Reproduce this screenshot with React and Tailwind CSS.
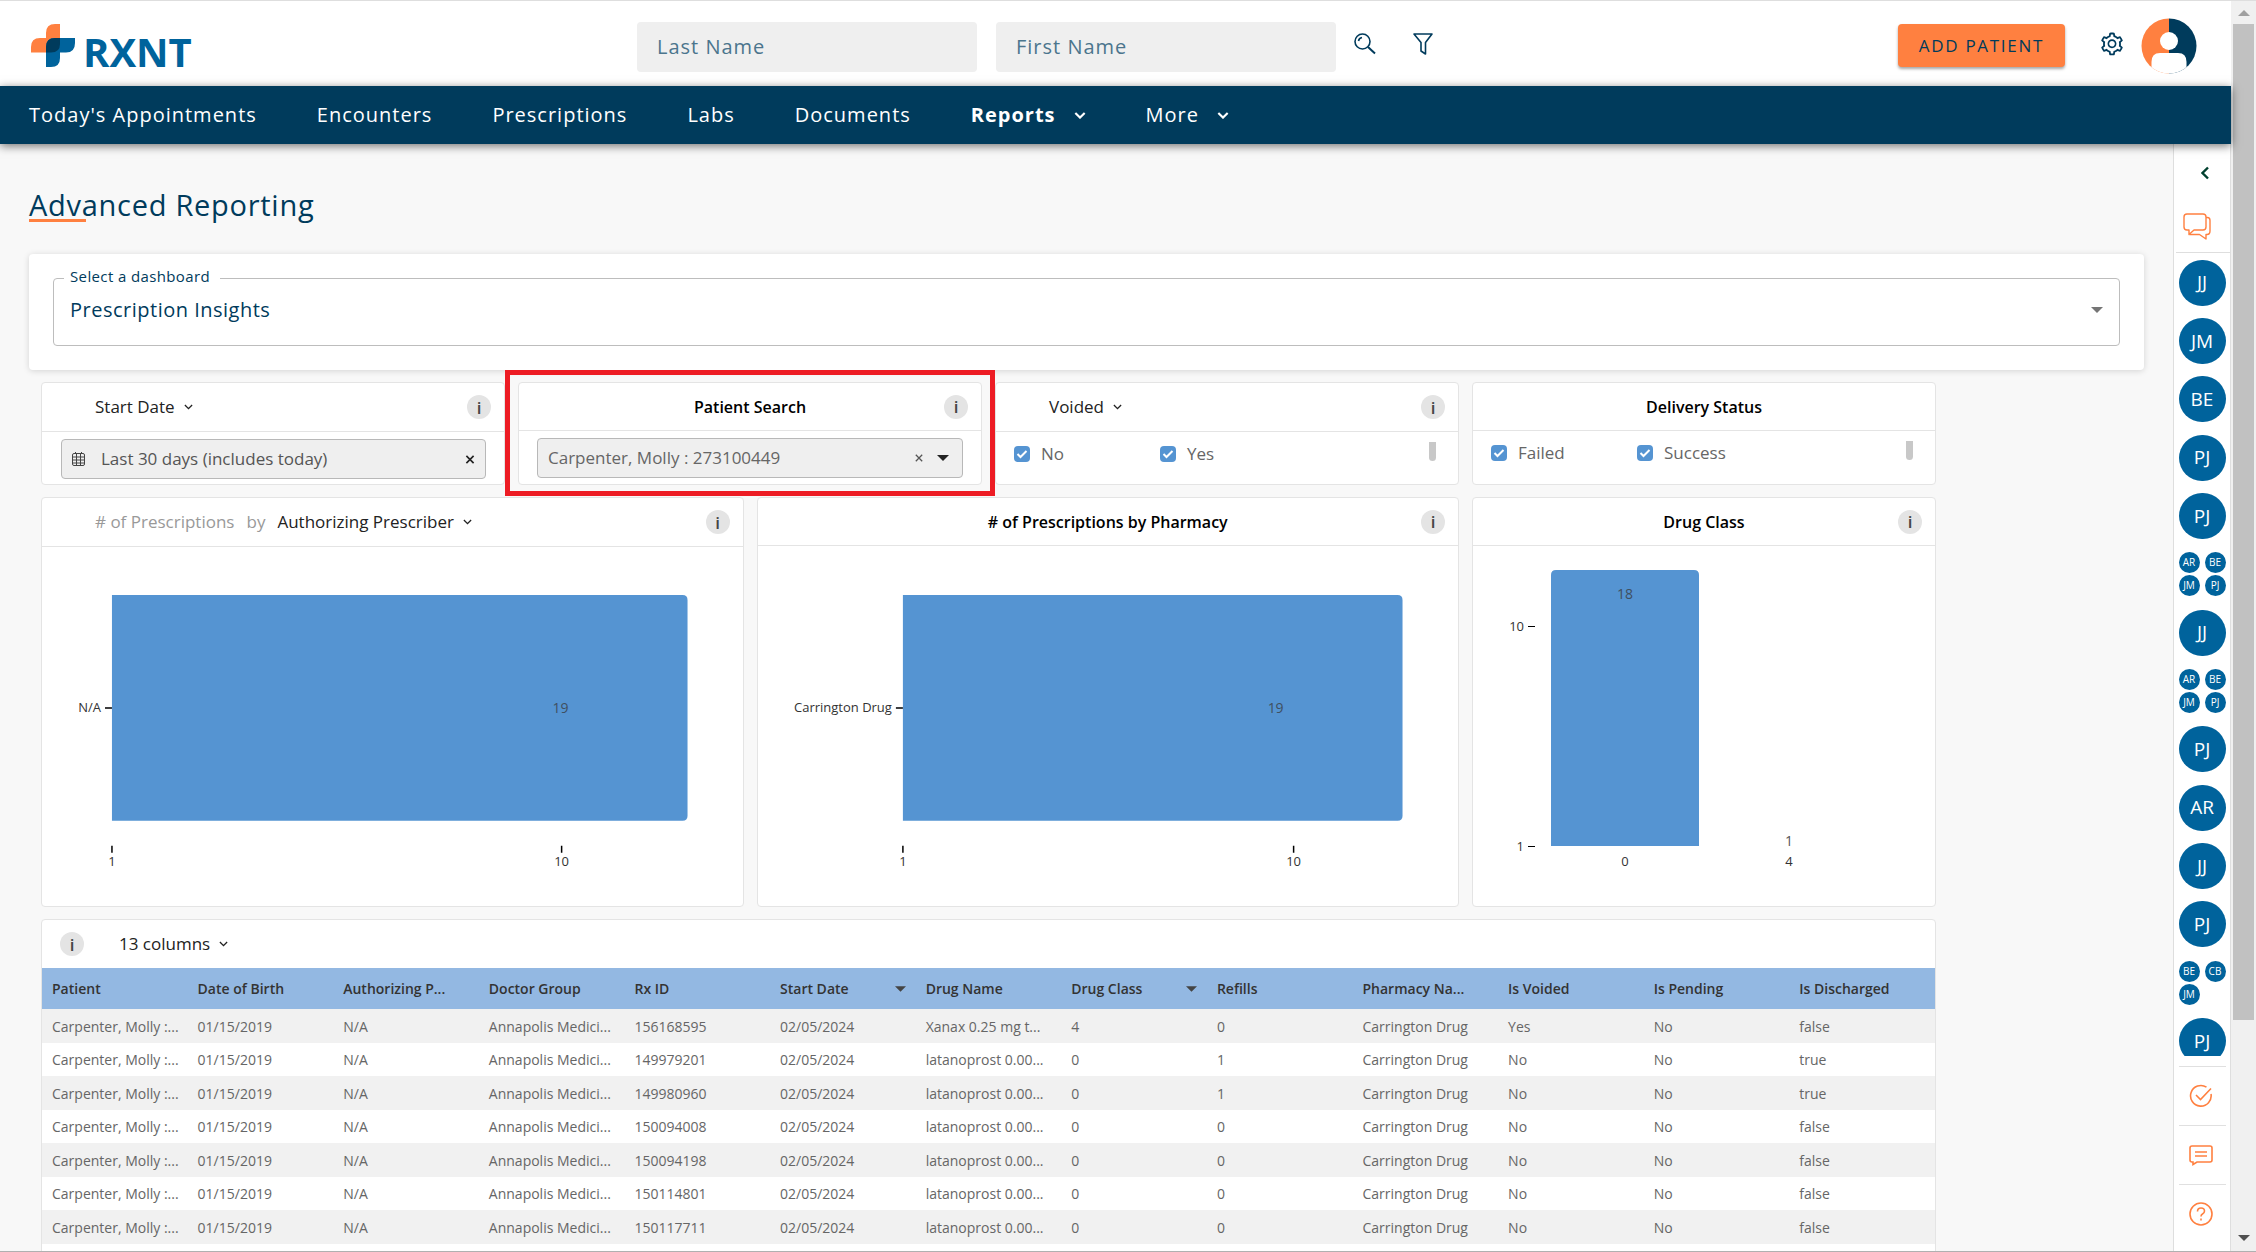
import React from "react";
import { AiOutlineSetting } from "react-icons/ai";

const NAV = [
  { label: "Today's Appointments" },
  { label: "Encounters" },
  { label: "Prescriptions" },
  { label: "Labs" },
  { label: "Documents" },
  { label: "Reports", menu: true, active: true },
  { label: "More", menu: true },
];

const COLUMNS = [
  "Patient", "Date of Birth", "Authorizing P...", "Doctor Group", "Rx ID", "Start Date", "Drug Name",
  "Drug Class", "Refills", "Pharmacy Na...", "Is Voided", "Is Pending", "Is Discharged",
];
const SORTED = ["Start Date", "Drug Class"];

const row = (rx, drug, cls, refills, voided, discharged) => [
  "Carpenter, Molly :...", "01/15/2019", "N/A", "Annapolis Medici...", rx, "02/05/2024", drug, cls, refills,
  "Carrington Drug", voided, "No", discharged,
];
const ROWS = [
  row("156168595", "Xanax 0.25 mg t...", "4", "0", "Yes", "false"),
  row("149979201", "latanoprost 0.00...", "0", "1", "No", "true"),
  row("149980960", "latanoprost 0.00...", "0", "1", "No", "true"),
  row("150094008", "latanoprost 0.00...", "0", "0", "No", "false"),
  row("150094198", "latanoprost 0.00...", "0", "0", "No", "false"),
  row("150114801", "latanoprost 0.00...", "0", "0", "No", "false"),
  row("150117711", "latanoprost 0.00...", "0", "0", "No", "false"),
];

const CHATS = [
  ["JJ"], ["JM"], ["BE"], ["PJ"], ["PJ"], ["AR", "BE", "JM", "PJ"], ["JJ"], ["AR", "BE", "JM", "PJ"],
  ["PJ"], ["AR"], ["JJ"], ["PJ"], ["BE", "CB", "JM"], ["PJ"],
];

function Chevron({ className = "w-[9px] h-[6px]", width = 1.5 }) {
  return (
    <svg viewBox="0 0 10 6" className={className} fill="none" stroke="currentColor" strokeWidth={width} aria-hidden="true">
      <path d="M1 0.8 L5 4.8 L9 0.8" />
    </svg>
  );
}

function Caret({ className }) {
  return (
    <svg viewBox="0 0 12 6" className={className} fill="currentColor" aria-hidden="true">
      <path d="M0 0 H12 L6 6 Z" />
    </svg>
  );
}

function Info() {
  return (
    <button aria-label="Information" className="flex h-6 w-6 shrink-0 items-center justify-center rounded-full bg-[#e4e4e4] text-[17px] leading-none font-semibold text-[#444]">
      i
    </button>
  );
}

function Logo() {
  return (
    <a href="#home" aria-label="RXNT home" className="flex items-end gap-2">
      <svg viewBox="0 0 44 43" className="h-[43px] w-11" aria-hidden="true">
        <path d="M15 14 V9 Q15 0 24 0 H29 V28.500 H0 V23 Q0 14 9 14 Z" fill="#ff8040" />
        <path d="M24 14 H44 V19 Q44 28.500 35 28.500 H29 V34 Q29 43 20 43 H15 V23 Q15 14 24 14 Z" fill="#00639c" />
        <path d="M24 14 H29 V20 Q29 28.500 20 28.500 H15 V23 Q15 14 24 14 Z" fill="#003b5c" />
      </svg>
      <span className="text-[40px] leading-[31px] font-bold text-[#00639c]">RXNT</span>
    </a>
  );
}

function SearchField({ label }) {
  return (
    <input
      aria-label={label}
      placeholder={label}
      className="h-[50px] w-[340px] rounded bg-[#efefef] px-5 text-[20px] tracking-wider text-[#003b5c] placeholder:text-[#4b758d]"
    />
  );
}

function TopBar() {
  return (
    <div className="flex h-[86px] items-center border-t border-[#dedede] bg-white pt-1 pr-[34px] pl-[31px]">
      <div className="w-[606px] shrink-0"><Logo /></div>
      <div className="mt-[2px] flex gap-[19px]">
        <SearchField label="Last Name" />
        <SearchField label="First Name" />
      </div>
      <div className="mb-1 ml-[17px] flex items-center gap-9 text-[#003b5c]">
        <button aria-label="Search">
          <svg viewBox="0 0 24 22" className="h-[22px] w-6" fill="none" stroke="currentColor" strokeWidth="1.6">
            <circle cx="9.500" cy="8.500" r="7.500" />
            <path d="M5.500 8 Q6 5 9 4.500" />
            <path d="M15 14 L22 20.500" strokeWidth="2" />
          </svg>
        </button>
        <button aria-label="Filter">
          <svg viewBox="0 0 20 22" className="h-[22px] w-5" fill="none" stroke="currentColor" strokeWidth="1.6">
            <path d="M1 1 H19 L12.500 9.500 V21 L8 18 V9.500 Z" strokeLinejoin="round" />
          </svg>
        </button>
      </div>
      <button className="ml-auto h-[43px] rounded bg-[#ff8040] px-[21px] text-[17px] font-medium tracking-widest text-[#003b5c] shadow-[0_2px_3px_rgba(0,0,0,0.35)]">
        ADD PATIENT
      </button>
      <button aria-label="Settings" className="mb-1 ml-[34px] text-[#003b5c]">
        <AiOutlineSetting className="h-[26px] w-[26px]" />
      </button>
      <button aria-label="Account" className="ml-4">
        <svg viewBox="0 0 56 56" className="h-14 w-14">
          <defs>
            <clipPath id="avatar"><circle cx="28" cy="28" r="27.500" /></clipPath>
          </defs>
          <g clipPath="url(#avatar)">
            <rect width="28" height="56" fill="#ff8040" />
            <rect x="28" width="28" height="56" fill="#003b5c" />
            <circle cx="28" cy="23" r="9" fill="#fff" />
            <path d="M10.500 60 V44 Q10.500 35 19 35 H37 Q45.500 35 45.500 44 V60 Z" fill="#fff" />
          </g>
        </svg>
      </button>
    </div>
  );
}

function NavBar() {
  return (
    <nav className="relative z-20 flex h-[58px] items-center gap-[60px] bg-[#003b5c] pl-[29px] text-[20px] tracking-wider text-white shadow-[0_2px_9px_rgba(0,0,0,0.55)]">
      {NAV.map((item) => (
        <a key={item.label} href="#nav" className={"flex items-center gap-[18px] " + (item.active ? "font-bold" : "font-medium")}>
          {item.label}
          {item.menu && <Chevron className="h-[7px] w-3" width={1.8} />}
        </a>
      ))}
    </nav>
  );
}

function Card({ className = "", children }) {
  return <section className={"rounded border border-[#e4e4e4] bg-white " + className}>{children}</section>;
}

function CardHead({ title, centered, info = true, muted }) {
  if (centered) {
    return (
      <header className="grid h-12 grid-cols-[24px_1fr_24px] items-center border-b border-[#e4e4e4] px-[13px] text-[16px] text-black">
        <h2 className="col-start-2 text-center font-semibold">{title}</h2>
        {info && <Info />}
      </header>
    );
  }
  return (
    <header className="flex h-[49px] items-center border-b border-[#e4e4e4] pr-[13px] pl-[53px] text-[17px] text-[#222]">
      {muted && <span className="mr-3 flex gap-3 text-[#999]"><span>{muted}</span><span>by</span></span>}
      <button className="mr-auto flex items-center gap-[9px]">{title}<Chevron /></button>
      <Info />
    </header>
  );
}

function Tick({ label }) {
  return (
    <label className="flex w-[146px] items-center gap-[11px]">
      <span className="grid h-4 w-4">
        <input type="checkbox" defaultChecked className="col-start-1 row-start-1 h-4 w-4 appearance-none rounded-sm bg-[#5594d2]" />
        <svg viewBox="0 0 16 16" className="pointer-events-none col-start-1 row-start-1 h-4 w-4" fill="none" stroke="#fff" strokeWidth="2" aria-hidden="true">
          <path d="M3.500 8 L6.500 11 L12.500 5" />
        </svg>
      </span>
      {label}
    </label>
  );
}

function TickList({ items }) {
  return (
    <div className="flex h-[43px] items-center pr-[22px] pl-[18px] text-[17px] text-[#666]">
      {items.map((t) => <Tick key={t} label={t} />)}
      <span className="mb-1 ml-auto h-[19px] w-[7px] rounded-b bg-[#c8c8c8]" />
    </div>
  );
}

function Filters() {
  return (
    <>
      <Card className="col-span-2 h-[103px]">
        <CardHead title="Start Date" />
        <div className="px-[18px] pt-[7px] pl-[19px]">
          <div className="flex h-10 items-center rounded-sm border border-[#b8b8b8] bg-[#efefef] px-[10px] text-[17px] text-[#555]">
            <svg viewBox="0 0 13 14" className="mr-4 h-[14px] w-[13px]" fill="none" stroke="#444" strokeWidth="1" aria-hidden="true">
              <rect x="0.500" y="1.500" width="12" height="12" rx="1.500" />
              <path d="M0.500 5 H12.500 M0.500 8 H12.500 M0.500 11 H12.500 M4.500 1.500 V13.500 M8.500 1.500 V13.500 M3.500 0 V2 M9.500 0 V2" />
            </svg>
            <span>Last 30 days (includes today)</span>
            <button aria-label="Clear date" className="ml-auto">
              <svg viewBox="0 0 10 10" className="h-[9px] w-[10px]" stroke="#222" strokeWidth="1.8"><path d="M1 1 L9 9 M9 1 L1 9" /></svg>
            </button>
          </div>
        </div>
      </Card>
      <Card className="relative col-span-2 h-[103px]">
        <CardHead title="Patient Search" centered />
        <div className="px-[18px] pt-[7px]">
          <div className="flex h-10 items-center rounded-sm border border-[#b8b8b8] bg-[#efefef] px-[10px] text-[17px] text-[#666]">
            <span>Carpenter, Molly : 273100449</span>
            <button aria-label="Clear patient" className="mr-[14px] ml-auto">
              <svg viewBox="0 0 10 10" className="h-2 w-2" stroke="#555" strokeWidth="1.6"><path d="M1 1 L9 9 M9 1 L1 9" /></svg>
            </button>
            <button aria-label="Choose patient" className="text-[#222]"><Caret className="mr-[3px] h-[6px] w-3" /></button>
          </div>
        </div>
        <div className="pointer-events-none absolute -inset-x-[14px] -top-[13px] -bottom-3 z-10 border-[5px] border-[#ed1c24]" />
      </Card>
      <Card className="col-span-2 h-[103px]">
        <CardHead title="Voided" />
        <TickList items={["No", "Yes"]} />
      </Card>
      <Card className="col-span-2 h-[103px]">
        <CardHead title="Delivery Status" centered info={false} />
        <TickList items={["Failed", "Success"]} />
      </Card>
    </>
  );
}

/* Horizontal bar on a logarithmic axis that runs from 1 upward. */
function BarChart({ name, x0, x1, ten, valueX, className = "" }) {
  return (
    <svg viewBox="0 0 701 360" className={"block w-full " + className} role="img" aria-label={name + ": 19"} fontSize="13" fill="#333">
      <path d={`M${x0} 48 H${x1 - 5} q5 0 5 5 V269 q0 5 -5 5 H${x0} Z`} fill="#5594d2" />
      <path d={`M${x0 - 7} 161 H${x0} M${x0} 299 V306 M${ten} 299 V306`} stroke="#000" strokeWidth="1.5" />
      <text x={x0 - 11} y="165" textAnchor="end">{name}</text>
      <text x={valueX} y="166" textAnchor="middle" fontSize="14" fontWeight="500" fill="#3f4f60">19</text>
      <text x={x0} y="319" textAnchor="middle">1</text>
      <text x={ten} y="319" textAnchor="middle">10</text>
    </svg>
  );
}

function ClassChart() {
  return (
    <svg viewBox="0 0 462 360" className="mt-px block w-full" role="img" aria-label="Drug class 0: 18, drug class 4: 1" fontSize="13" fill="#333">
      <path d="M78 299 V28 q0 -5 5 -5 H221 q5 0 5 5 V299 Z" fill="#5594d2" />
      <path d="M55 79.500 H62 M55 299.500 H62" stroke="#000" />
      <text x="51" y="84" textAnchor="end">10</text>
      <text x="51" y="304" textAnchor="end">1</text>
      <text x="152" y="52" textAnchor="middle" fontSize="14" fontWeight="500" fill="#3f4f60">18</text>
      <text x="152" y="319" textAnchor="middle">0</text>
      <text x="316" y="299" textAnchor="middle" fontSize="14" fontWeight="500" fill="#555">1</text>
      <text x="316" y="319" textAnchor="middle">4</text>
    </svg>
  );
}

function DataTable() {
  return (
    <Card className="col-span-8">
      <header className="flex h-12 items-center gap-[35px] px-[18px] text-[17px] text-[#222]">
        <Info />
        <button className="flex items-center gap-[9px]">13 columns<Chevron /></button>
      </header>
      <table className="w-full table-fixed border-collapse text-left text-[14px] whitespace-nowrap">
        <thead>
          <tr className="h-[41px] bg-[#93b8e2] text-[#333]">
            {COLUMNS.map((c) => (
              <th key={c} scope="col" className="px-[10px] font-semibold">
                <span className="flex items-center justify-between">
                  {c}
                  {SORTED.includes(c) && <Caret className="h-[6px] w-[11px] text-[#444]" />}
                </span>
              </th>
            ))}
          </tr>
        </thead>
        <tbody className="text-[#666]">
          {ROWS.map((r) => (
            <tr key={r[4]} className="odd:h-[34px] odd:bg-[#f1f1f1] even:h-[33px]">
              {r.map((v, i) => <td key={i} className="pr-0 pl-[10px]">{v}</td>)}
            </tr>
          ))}
        </tbody>
      </table>
      <div className="h-8" />
    </Card>
  );
}

function Main() {
  return (
    <main className="min-w-0 flex-1 overflow-hidden pr-[29px] pl-[29px]">
      <h1 className="mt-[42px] text-[29px] leading-[38px] tracking-wide text-[#003b5c]">Advanced Reporting</h1>
      <div className="-mt-[5px] h-[3px] w-[57px] bg-[#ff8040]" />
      <div className="mt-8 h-[116px] rounded bg-white px-6 pt-[14px] shadow-[0_1px_6px_rgba(0,0,0,0.15)]">
        <fieldset className="relative h-[78px] rounded border border-[#bdbdbd] text-[#003b5c]">
          <legend className="ml-[10px] pr-[10px] pb-1 pl-[6px] text-[15px] leading-4 tracking-wide">
            <label htmlFor="dashboard">Select a dashboard</label>
          </legend>
          <div className="flex items-center pr-4">
            <select id="dashboard" className="h-11 flex-1 appearance-none pl-4 text-[20px] tracking-wide">
              <option>Prescription Insights</option>
            </select>
            <Caret className="h-[6px] w-3 text-[#757575]" />
          </div>
        </fieldset>
      </div>
      <div className="mt-3 ml-3 grid max-w-[1895px] grid-cols-8 gap-x-[13px] gap-y-3">
        <Filters />
        <Card className="col-span-3 h-[410px]">
          <CardHead title="Authorizing Prescriber" muted="# of Prescriptions" />
          <BarChart name="N/A" x0={70} x1={646} ten={520} valueX={519} />
        </Card>
        <Card className="col-span-3 h-[410px]">
          <CardHead title="# of Prescriptions by Pharmacy" centered />
          <BarChart className="mt-px" name="Carrington Drug" x0={145} x1={645} ten={536} valueX={518} />
        </Card>
        <Card className="col-span-2 h-[410px]">
          <CardHead title="Drug Class" centered />
          <ClassChart />
        </Card>
        <DataTable />
      </div>
    </main>
  );
}

function ChatGroup({ people }) {
  if (people.length === 1) {
    return (
      <button className="h-[46px] w-[47px] rounded-full bg-[#00639c] text-[19px] text-white">{people[0]}</button>
    );
  }
  return (
    <button className="grid grid-cols-2 gap-x-[5px] gap-y-[2px]">
      {people.map((p) => (
        <span key={p} className="flex h-[21px] w-[21px] items-center justify-center rounded-full bg-[#00639c] text-[10px] font-medium text-white">{p}</span>
      ))}
    </button>
  );
}

function SideAction({ label, children }) {
  return (
    <button aria-label={label} className="flex h-[59px] w-[47px] shrink-0 items-center justify-center border-t border-[#e0e0e0] pr-[3px] text-[#ff8040]">
      <svg viewBox="0 0 24 24" className="h-6 w-6" fill="none" stroke="currentColor" strokeWidth="1.600">{children}</svg>
    </button>
  );
}

function Sidebar() {
  return (
    <aside className="flex w-[58px] shrink-0 flex-col items-center border-x border-[#dedede] bg-white">
      <button aria-label="Expand" className="mt-[22px] ml-[6px] text-[#00402f]">
        <svg viewBox="0 0 8 14" className="h-[14px] w-2" fill="none" stroke="currentColor" strokeWidth="2.400"><path d="M7 1.500 L1.500 7 L7 12.500" /></svg>
      </button>
      <button aria-label="Messages" className="mt-[33px] mr-[10px] text-[#ff8040]">
        <svg viewBox="0 0 28 27" className="h-[27px] w-7" fill="none" stroke="currentColor" strokeWidth="1.400" strokeLinejoin="round">
          <path d="M4 1 H20 Q23 1 23 4 V14 Q23 17 20 17 H11 L6 21.500 V17 H4 Q1 17 1 14 V4 Q1 1 4 1 Z" />
          <path d="M23 4.500 H24.500 Q27 4.500 27 7.500 V18 Q27 21.500 24 21.500 H23 V26 L16.500 21.500 H6.500" />
        </svg>
      </button>
      <div className="mt-3 w-[54px] self-end border-t border-[#dedede]" />
      <div className="min-h-0 flex-1 overflow-hidden">
        {CHATS.map((c, i) => (
          <div key={i} className="flex h-[58px] items-center justify-center nth-[3n+1]:h-[59px]">
            <ChatGroup people={c} />
          </div>
        ))}
      </div>
      <div className="h-[10px] shrink-0" />
      <SideAction label="Tasks">
        <path d="M22 10 A10.300 10.300 0 1 1 17.500 3.200" />
        <path d="M7 11 L11.500 15.500 L22 4.500" />
      </SideAction>
      <SideAction label="Comments">
        <path d="M3 3 H21 Q23 3 23 5 V17 Q23 19 21 19 H8 L4 21.500 V19 H3 Q1 19 1 17 V5 Q1 3 3 3 Z" />
        <path d="M6 9 H18 M6 13 H18" />
      </SideAction>
      <SideAction label="Help">
        <circle cx="12" cy="12" r="11" />
        <path d="M8.500 9.500 Q8.500 6 12 6 Q15.500 6 15.500 9 Q15.500 11 13.500 12 Q12 12.800 12 14.500" />
        <path d="M12 16.500 V18.500" />
      </SideAction>
      <div className="h-2 shrink-0" />
    </aside>
  );
}

function ScrollRail() {
  return (
    <div className="flex w-[25px] shrink-0 flex-col items-center border-t border-[#dedede] bg-[#f0f0f0]" aria-hidden="true">
      <Caret className="mt-[9px] h-[6px] w-3 rotate-180 text-[#a0a0a0]" />
      <div className="mt-2 h-[996px] w-[21px] bg-[#c1c1c1]" />
      <Caret className="mt-auto mb-[10px] h-[6px] w-3 text-[#505050]" />
    </div>
  );
}

export default function App() {
  return (
    <div className="flex h-screen overflow-hidden border-b border-[#b0b0b0] bg-[#f8f8f8] font-['Open_Sans','Noto_Sans',sans-serif]">
      <div className="flex min-w-0 flex-1 flex-col">
        <TopBar />
        <NavBar />
        <div className="flex min-h-0 flex-1">
          <Main />
          <Sidebar />
        </div>
      </div>
      <ScrollRail />
    </div>
  );
}
